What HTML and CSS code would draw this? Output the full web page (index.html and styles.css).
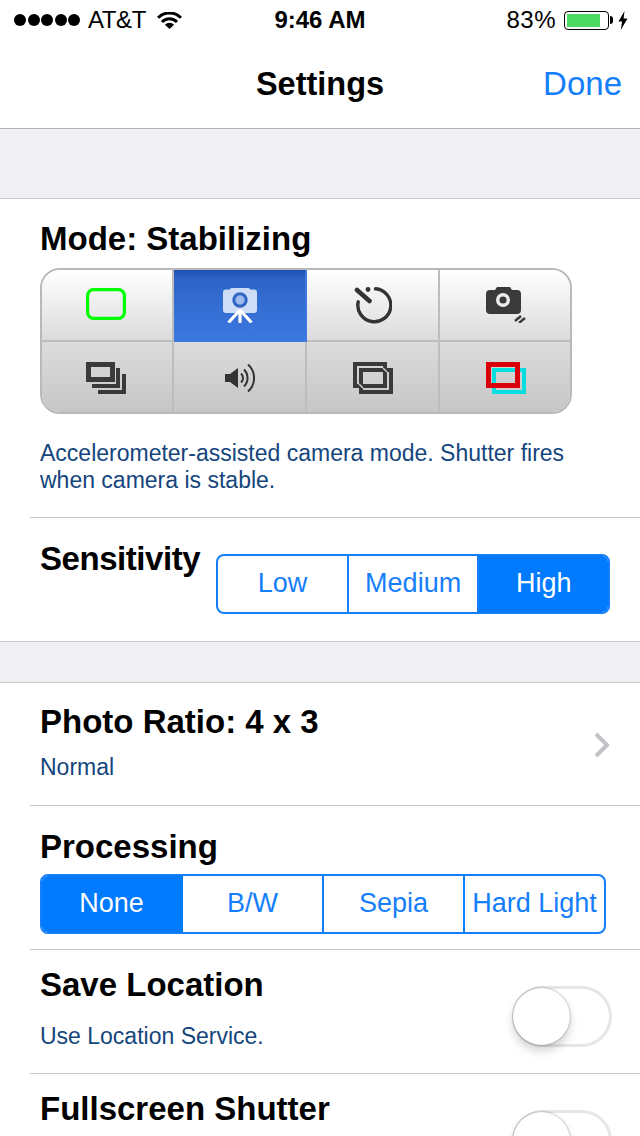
FILE: index.html
```html
<!DOCTYPE html>
<html lang="en">
<head>
    <meta charset="UTF-8">
    <meta name="viewport" content="width=device-width, initial-scale=1.0">
    <title>Settings</title>
    <link rel="stylesheet" href="styles.css">
</head>
<body>
    <div class="status-bar">
        <div class="status-left">
            <div class="signal"><i></i><i></i><i></i><i></i><i></i></div>
            <span class="carrier">AT&amp;T</span>
            <svg class="wifi" width="25" height="17" viewBox="0 0 25 17">
                <path d="M1 5.800a16 16 0 0 1 23 0" fill="none" stroke="#000" stroke-width="3"/>
                <path d="M5 10a10.500 10.500 0 0 1 15 0" fill="none" stroke="#000" stroke-width="3"/>
                <path d="M12.500 17l-4.600-4.300a6.500 6.500 0 0 1 9.200 0z" fill="#000"/>
            </svg>
        </div>
        <div class="status-time">9:46 AM</div>
        <div class="status-right">
            <span class="percent">83%</span>
            <div class="battery"><div class="battery-fill"></div></div>
            <div class="battery-tip"></div>
            <svg class="bolt" width="10" height="19" viewBox="0 0 10 19">
                <path d="M6.500 0L0.500 10.500h3.600L2.800 19 9.500 7.500H5.600z" fill="#000"/>
            </svg>
        </div>
    </div>

    <div class="nav-bar">
        <h1>Settings</h1>
        <a class="done" href="#">Done</a>
    </div>

    <div class="band band-top"></div>

    <div class="section">
        <div class="mode-block">
            <h2 class="mode-title">Mode: Stabilizing</h2>
            <div class="mode-grid">
                <div class="mode-cell top">
                    <svg width="40" height="34" viewBox="0 0 40 34"><rect x="1.600" y="1.600" width="36.800" height="28.800" rx="6" fill="none" stroke="#0f0" stroke-width="3.200"/></svg>
                </div>
                <div class="mode-cell top active">
                    <svg width="34" height="36" viewBox="0 0 34 36">
                        <path d="M3 2.500h4l1-1.500h18l1 1.500h4a3 3 0 0 1 3 3V23a3 3 0 0 1-3 3H3a3 3 0 0 1-3-3V5.500a3 3 0 0 1 3-3z" fill="#cfdcf7"/>
                        <circle cx="17" cy="13" r="6.200" fill="#9db9ee" stroke="#2f66c4" stroke-width="3"/>
                        <path d="M17 24v12M17 23L5.500 35.500M17 23l11.500 12.500" fill="none" stroke="#fff" stroke-width="3.200"/>
                    </svg>
                </div>
                <div class="mode-cell top">
                    <svg width="38" height="38" viewBox="0 0 38 38">
                        <path d="M21.500 2.800a16.500 16.500 0 1 1-17.300 13" fill="none" stroke="#333" stroke-width="3.400" stroke-linecap="round"/>
                        <path d="M3 4l12.500 11" fill="none" stroke="#333" stroke-width="4.600" stroke-linecap="round"/>
                        <circle cx="14" cy="3.500" r="2.400" fill="#333"/>
                    </svg>
                </div>
                <div class="mode-cell top">
                    <svg width="40" height="36" viewBox="0 0 40 36">
                        <path d="M4 3h5l2-3h13l2 3h5a4 4 0 0 1 4 4v16a4 4 0 0 1-4 4H4a4 4 0 0 1-4-4V7a4 4 0 0 1 4-4z" fill="#3a3a3a"/>
                        <circle cx="17" cy="13" r="7" fill="#ececec"/>
                        <circle cx="17" cy="13" r="3.600" fill="#3a3a3a"/>
                        <path d="M29 34l6-5M33 36l6-5" fill="none" stroke="#3a3a3a" stroke-width="2.400"/>
                    </svg>
                </div>
                <div class="mode-cell">
                    <svg width="40" height="32" viewBox="0 0 40 32">
                        <path d="M2.500 2.500h24v15h-24z" fill="none" stroke="#3a3a3a" stroke-width="5"/>
                        <path d="M6 24h26V6M12 30h26V12" fill="none" stroke="#3a3a3a" stroke-width="4"/>
                    </svg>
                </div>
                <div class="mode-cell">
                    <svg width="30" height="30" viewBox="0 0 30 30">
                        <path d="M0 11h5l8-6v20l-8-6H0z" fill="#333"/>
                        <path d="M16 10.500a6 6 0 0 1 0 9M19 6.500a12 12 0 0 1 0 17M23 1.500a18 18 0 0 1 0 27" fill="none" stroke="#333" stroke-width="2"/>
                    </svg>
                </div>
                <div class="mode-cell">
                    <svg width="40" height="32" viewBox="0 0 40 32">
                        <path d="M2 2h30v22H2zM8 8h30v22H8z" fill="none" stroke="#3a3a3a" stroke-width="4"/>
                        <path d="M6 22l4 4M30 6l4 4" fill="none" stroke="#c9c9c9" stroke-width="1.500"/>
                    </svg>
                </div>
                <div class="mode-cell">
                    <svg width="40" height="32" viewBox="0 0 40 32">
                        <path d="M8 8h30v22H8z" fill="none" stroke="#0adde0" stroke-width="4"/>
                        <path d="M2.500 2.500h29v21h-29z" fill="none" stroke="#d9000c" stroke-width="5"/>
                    </svg>
                </div>
            </div>
            <p class="note">Accelerometer-assisted camera mode. Shutter fires when camera is stable.</p>
        </div>

        <div class="row sensitivity-row">
            <h2>Sensitivity</h2>
            <div class="segments sens">
                <div class="seg">Low</div>
                <div class="seg">Medium</div>
                <div class="seg on">High</div>
            </div>
        </div>
    </div>

    <div class="band band-mid"></div>

    <div class="section">
        <div class="row photo-row">
            <div>
                <h2>Photo Ratio: 4 x 3</h2>
                <p class="note">Normal</p>
            </div>
            <svg class="chevron" width="18" height="28" viewBox="0 0 18 28"><path d="M3 3l11 11L3 25" fill="none" stroke="#c1c1c6" stroke-width="4"/></svg>
        </div>
        <div class="row processing-row">
            <h2>Processing</h2>
            <div class="segments proc">
                <div class="seg on">None</div>
                <div class="seg">B/W</div>
                <div class="seg">Sepia</div>
                <div class="seg">Hard Light</div>
            </div>
        </div>
        <div class="row toggle-row">
            <div>
                <h2>Save Location</h2>
                <p class="note">Use Location Service.</p>
            </div>
            <div class="switch"><div class="knob"></div></div>
        </div>
        <div class="row toggle-row last-row">
            <div>
                <h2>Fullscreen Shutter</h2>
            </div>
            <div class="switch"><div class="knob"></div></div>
        </div>
    </div>
</body>
</html>
```

FILE: styles.css
```css
* {
    margin: 0;
    padding: 0;
    box-sizing: border-box;
}

html, body {
    height: 1136px;
    overflow: hidden;
}

body {
    font-family: "Liberation Sans", Arial, sans-serif;
    background: #fff;
    color: #000;
}

.status-bar {
    height: 40px;
    display: grid;
    grid-template-columns: 1fr auto 1fr;
    align-items: center;
    padding: 0 12px;
    font-size: 24px;
}

.status-left {
    display: flex;
    align-items: center;
}

.signal {
    display: flex;
    gap: 1.5px;
    margin: 0 8px 0 2px;
}

.signal i {
    width: 12px;
    height: 12px;
    border-radius: 50%;
    background: #000;
}

.carrier {
    letter-spacing: -0.4px;
}

.wifi {
    margin-left: 11px;
}

.status-time {
    font-weight: bold;
    font-size: 24px;
}

.status-right {
    display: flex;
    align-items: center;
    justify-content: flex-end;
}

.percent {
    margin-right: 8px;
    font-size: 24px;
    letter-spacing: 0.5px;
}

.battery {
    width: 45px;
    height: 19px;
    border: 1.5px solid #000;
    border-radius: 4px;
    padding: 2px;
}

.battery-fill {
    width: 33px;
    height: 100%;
    background: #4cd964;
}

.battery-tip {
    width: 3px;
    height: 8px;
    background: #000;
    border-radius: 0 3px 3px 0;
    margin-left: 1px;
}

.bolt {
    margin-left: 5px;
}

.nav-bar {
    height: 89px;
    position: relative;
    display: flex;
    align-items: center;
    justify-content: center;
    border-bottom: 1px solid #b2b2b8;
}

.nav-bar h1 {
    font-size: 32.5px;
    font-weight: bold;
}

.done {
    position: absolute;
    right: 18px;
    top: 25px;
    font-size: 33px;
    color: #157efb;
    text-decoration: none;
}

.band {
    background: #efeff4;
    border-bottom: 1px solid #c8c7cc;
}

.band-top {
    height: 70px;
}

.band-mid {
    height: 42px;
    border-top: 1px solid #c8c7cc;
}

h2 {
    font-size: 33px;
    font-weight: bold;
    line-height: 40px;
}

.note {
    font-size: 23px;
    line-height: 27px;
    color: #14457c;
}

.mode-block {
    padding: 20px 60px 23px 40px;
}

.mode-title {
    margin-bottom: 9px;
}

.mode-grid {
    width: 532px;
    height: 146px;
    display: grid;
    grid-template-columns: 132px 133px 133px 1fr;
    grid-template-rows: 72px 1fr;
    border: 2px solid #b9b9b9;
    border-radius: 20px;
    overflow: hidden;
    margin-bottom: 26px;
}

.mode-cell {
    display: flex;
    align-items: center;
    justify-content: center;
    padding-top: 2px;
    background: linear-gradient(#dcdcdc, #c6c6c6);
    border-right: 2px solid #bdbdbd;
}

.mode-cell:nth-child(4n) {
    border-right: none;
    padding-left: 2px;
}

.mode-cell:nth-child(4n+1) {
    padding-right: 2px;
}

.mode-cell.top {
    padding-top: 0;
    background: linear-gradient(#fff, #dcdcdc);
    border-bottom: 2px solid #bdbdbd;
}

.mode-cell.active {
    background: linear-gradient(#1d4fae 0, #2e64c8 12%, #3b78e0 100%);
    border-color: #3b78e0;
}

.row {
    display: flex;
    margin-left: 30px;
    padding-left: 10px;
    border-top: 1px solid #c8c7cc;
}

.sensitivity-row {
    height: 124px;
    padding-top: 21px;
    gap: 16px;
}

.sensitivity-row h2 {
    letter-spacing: -0.45px;
}

.segments {
    display: flex;
    border: 2px solid #157efb;
    border-radius: 8px;
    overflow: hidden;
    color: #157efb;
    font-size: 27px;
}

.seg {
    flex: 1;
    display: flex;
    align-items: center;
    justify-content: center;
    padding-bottom: 2px;
    border-right: 2px solid #157efb;
}

.seg:last-child {
    border-right: none;
}

.seg.on {
    background: #007aff;
    color: #fff;
    border-color: #007aff;
}

.sens {
    width: 394px;
    height: 60px;
    margin-top: 15px;
}

.photo-row {
    height: 122px;
    justify-content: space-between;
    align-items: flex-start;
    padding: 19px 29px 0 10px;
    border-top: none;
}

.photo-row .note {
    margin-top: 12px;
}

.chevron {
    margin-top: 29px;
}

.processing-row {
    height: 144px;
    flex-direction: column;
    padding-top: 21px;
}

.proc {
    width: 566px;
    height: 60px;
    margin-top: 7px;
}

.toggle-row {
    height: 124px;
    justify-content: space-between;
    padding: 15px 28px 0 10px;
}

.toggle-row .note {
    margin-top: 18px;
}

/* last row is cut off by the bottom of the screen */
.last-row {
    height: 63px;
    overflow: hidden;
}

.switch {
    width: 100px;
    height: 61px;
    border: 3px solid #e6e6e6;
    border-radius: 31px;
    margin-top: 21px;
    position: relative;
    flex: none;
}

.knob {
    position: absolute;
    left: -2px;
    top: -1px;
    width: 57px;
    height: 57px;
    border-radius: 50%;
    background: #fff;
    box-shadow: 0 0 2px rgba(0, 0, 0, 0.45), 0 6px 10px rgba(0, 0, 0, 0.18);
}
```
